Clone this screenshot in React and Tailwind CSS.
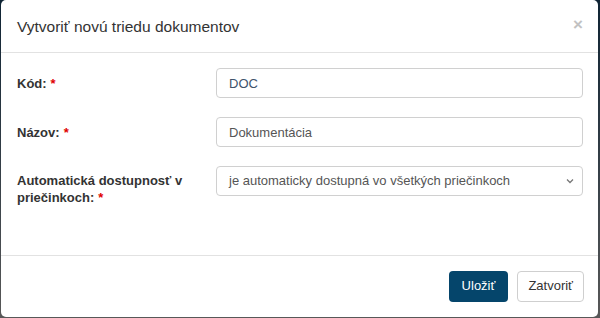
const Req = () => <span className="text-[#e00000] ml-1">*</span>;

const Row = ({ label, children, top }) => (
  <div className={top ? "grid grid-cols-[199px_1fr] items-start" : "grid grid-cols-[199px_1fr] items-center"}>
    <label className={top ? "text-[13px] font-bold text-[#333] leading-[17px] pr-6 pt-[6px]" : "text-[13px] font-bold text-[#333] leading-[17px] pr-6"}>
      {label}
    </label>
    {children}
  </div>
);

export default function App() {
  return (
    <div
      className="w-[600px] h-[318px] bg-linear-to-b from-[#0f2434] to-[#585858] pl-[1px] pr-[2px] pb-[1px]"
      style={{ fontFamily: '"Liberation Sans", Arial, sans-serif' }}
    >
      <div className="h-full bg-white rounded-[5px] flex flex-col">
        <div className="h-[53px] border-b border-[#e2e2e2] flex items-center justify-between pl-4 pr-[15px] shrink-0">
          <h4 className="text-[15.5px] text-[#333] pt-[1px]">Vytvoriť novú triedu dokumentov</h4>
          <button className="text-[#c2c2c2] text-[17px] leading-none mt-[-4px] font-bold">×</button>
        </div>

        <div className="flex-1 pl-4 pr-[15px] pt-[15px] flex flex-col gap-[19px]">
          <Row label={<>Kód:<Req /></>}>
            <input
              className="h-[30px] border border-[#d0d0d0] rounded-[4px] px-3 text-[13px] text-[#40536b] outline-none"
              defaultValue="DOC"
            />
          </Row>
          <Row label={<>Názov:<Req /></>}>
            <input
              className="h-[30px] border border-[#d0d0d0] rounded-[4px] px-3 text-[13px] text-[#555] outline-none"
              defaultValue="Dokumentácia"
            />
          </Row>
          <Row
            top
            label={
              <>
                <span className="block">Automatická dostupnosť v</span>
                <span className="block">
                  priečinkoch:<Req />
                </span>
              </>
            }
          >
            <div className="relative">
              <div className="h-[30px] border border-[#d0d0d0] rounded-[4px] pl-3 pr-8 flex items-center text-[13px] text-[#555]">
                je automaticky dostupná vo všetkých priečinkoch
              </div>
              <svg
                className="absolute right-[9px] top-[12px]"
                width="8"
                height="6"
                viewBox="0 0 8 6"
                fill="none"
                stroke="#777"
                strokeWidth="1.3"
              >
                <path d="M1 1.5l3 3 3-3" />
              </svg>
            </div>
          </Row>
        </div>

        <div className="h-[62px] border-t border-[#e2e2e2] flex items-center justify-end gap-[9px] pr-[14px] pb-[1px] shrink-0">
          <button className="h-[31px] px-[13px] rounded-[4px] bg-[#05456b] text-white text-[13px]">Uložiť</button>
          <button className="h-[31px] px-[10px] rounded-[4px] border border-[#cfcfcf] bg-white text-[#333] text-[13px]">Zatvoriť</button>
        </div>
      </div>
    </div>
  );
}
